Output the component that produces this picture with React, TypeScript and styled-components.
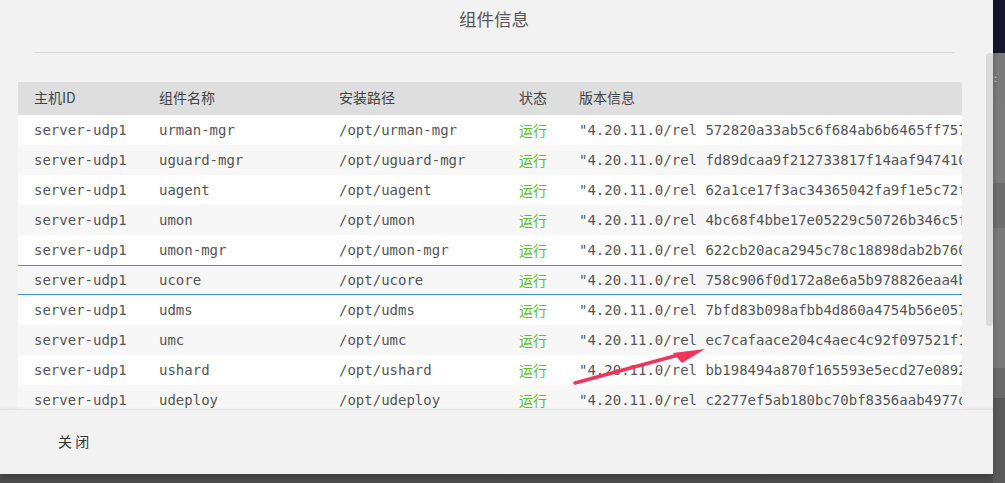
import React from "react";
import styled, { createGlobalStyle } from "styled-components";

const Global = createGlobalStyle`
  html, body { margin: 0; padding: 0; background: #5a5a5a; }
  body { font-family: "Noto Sans CJK SC", "Noto Sans", sans-serif; }
  * { box-sizing: border-box; }
`;

const Page = styled.div`
  display: flex;
  width: 1005px;
  height: 483px;
  overflow: hidden;
  background: linear-gradient(#6a6a6a, #4c4c4c);
`;

const Modal = styled.div`
  position: relative;
  width: 993px;
  height: 474px;
  flex: none;
  display: flex;
  flex-direction: column;
  background: #f2f2f2;
  border-bottom-right-radius: 3px;
  box-shadow: 0 2px 6px rgba(0, 0, 0, 0.25);
`;

const Side = styled.div`
  flex: 1;
  display: flex;
  flex-direction: column;
`;

const Band = styled.div<{ $h: number; $c: string }>`
  height: ${(p) => p.$h}px;
  background: ${(p) => p.$c};
  flex: none;
  color: #cfcfcf;
  font-size: 10px;
  line-height: ${(p) => p.$h}px;
  padding-left: 1px;
`;

const Header = styled.div`
  height: 53px;
  margin: 0 39px 0 34px;
  border-bottom: 1px solid #d9d9d9;
  display: flex;
  justify-content: center;
  padding-top: 6px;
  font-size: 17.5px;
  color: #555;
  line-height: 26px;
`;

const Body = styled.div`
  flex: 1;
  overflow: hidden;
  padding: 29px 0 0 18px;
`;

const Table = styled.div`
  width: 944px;
  overflow: hidden;
  border-top-right-radius: 3px;
`;

const Row = styled.div<{ $alt?: boolean; $head?: boolean; $active?: boolean }>`
  display: grid;
  grid-template-columns: 125px 180px 180px 60px 1fr;
  height: ${(p) => (p.$head ? 33 : 30)}px;
  padding-bottom: ${(p) => (p.$head ? 3 : 0)}px;
  align-items: center;
  background: ${(p) => (p.$head ? "#dedede" : p.$alt ? "#f7f7f7" : "#ffffff")};
  box-shadow: ${(p) =>
    p.$active ? "inset 0 1px 0 #3d8ee8, inset 0 -1px 0 #3d8ee8" : "none"};
  white-space: nowrap;
`;

const HeadCell = styled.div`
  padding-left: 16px;
  font-size: 14px;
  color: #444;
  font-family: "Noto Sans CJK SC", "Noto Sans", sans-serif;
`;

const Cell = styled.div<{ $ok?: boolean }>`
  padding-left: 16px;
  font-size: 14px;
  overflow: hidden;
  color: ${(p) => (p.$ok ? "#5cbf2a" : "#555")};
  font-family: ${(p) =>
    p.$ok
      ? '"Noto Sans CJK SC", "Noto Sans", sans-serif'
      : '"DejaVu Sans Mono", "Liberation Mono", monospace'};
`;

const VersionCell = styled(Cell)`
  overflow: visible;
`;

const Footer = styled.div`
  height: 65px;
  flex: none;
  border-top: 1px solid #e2e2e2;
  box-shadow: 0 -1px 2px rgba(0, 0, 0, 0.04);
  display: flex;
  align-items: center;
  padding: 0 0 2px 58px;
  background: #f2f2f2;
  position: relative;
`;

const CloseButton = styled.button`
  border: none;
  background: transparent;
  padding: 0;
  font-size: 14px;
  color: #333;
  font-family: "Noto Sans CJK SC", "Noto Sans", sans-serif;
  white-space: pre;
  cursor: pointer;
`;

const Scrollbar = styled.div`
  position: absolute;
  right: 0;
  top: 53px;
  width: 7px;
  height: 273px;
  border-radius: 4px;
  background: #dadada;
`;

const Arrow = styled.svg`
  position: absolute;
  left: 570px;
  top: 340px;
  pointer-events: none;
`;

const rows = [
  ["urman-mgr", "572820a33ab5c6f684ab6b6465ff7571d2e"],
  ["uguard-mgr", "fd89dcaa9f212733817f14aaf9474102c3a"],
  ["uagent", "62a1ce17f3ac34365042fa9f1e5c72f81b0"],
  ["umon", "4bc68f4bbe17e05229c50726b346c5f2d91"],
  ["umon-mgr", "622cb20aca2945c78c18898dab2b7601ae4"],
  ["ucore", "758c906f0d172a8e6a5b978826eaa4b0c73"],
  ["udms", "7bfd83b098afbb4d860a4754b56e0572f19"],
  ["umc", "ec7cafaace204c4aec4c92f097521f1b8d0"],
  ["ushard", "bb198494a870f165593e5ecd27e0892a6c4"],
  ["udeploy", "c2277ef5ab180bc70bf8356aab4977d3e52"],
  ["uproxy", "9a1f3c2e7b5d4086a3e1f9c2b7d5e4a1c60"],
];

export default function App() {
  return (
    <>
      <Global />
      <Page>
        <Modal>
          <Header>组件信息</Header>
          <Body>
            <Table>
              <Row $head>
                <HeadCell>主机ID</HeadCell>
                <HeadCell>组件名称</HeadCell>
                <HeadCell>安装路径</HeadCell>
                <HeadCell>状态</HeadCell>
                <HeadCell>版本信息</HeadCell>
              </Row>
              {rows.map(([name, hash], i) => (
                <Row key={name} $alt={i % 2 === 1} $active={name === "ucore"}>
                  <Cell>server-udp1</Cell>
                  <Cell>{name}</Cell>
                  <Cell>/opt/{name}</Cell>
                  <Cell $ok>运行</Cell>
                  <VersionCell>"4.20.11.0/rel {hash}</VersionCell>
                </Row>
              ))}
            </Table>
          </Body>
          <Footer>
            <CloseButton>关 闭</CloseButton>
          </Footer>
          <Scrollbar />
          <Arrow width="140" height="50" viewBox="0 0 140 50">
            <line x1="5" y1="43" x2="112" y2="14" stroke="#f2335c" strokeWidth="3.5" strokeLinecap="round" />
            <polygon points="135,9 103,13 112,23" fill="#f2335c" />
          </Arrow>
        </Modal>
        <Side>
          <Band $h={53} $c="#151530" />
          <Band $h={50} $c="#7a7a7a">:</Band>
          <Band $h={80} $c="#7c7c7c" />
          <Band $h={45} $c="#6e6e6e" />
          <Band $h={140} $c="#7a7a7a" />
          <Band $h={30} $c="#6a6a6a" />
          <Band $h={85} $c="#5a5a5a" />
        </Side>
      </Page>
    </>
  );
}
